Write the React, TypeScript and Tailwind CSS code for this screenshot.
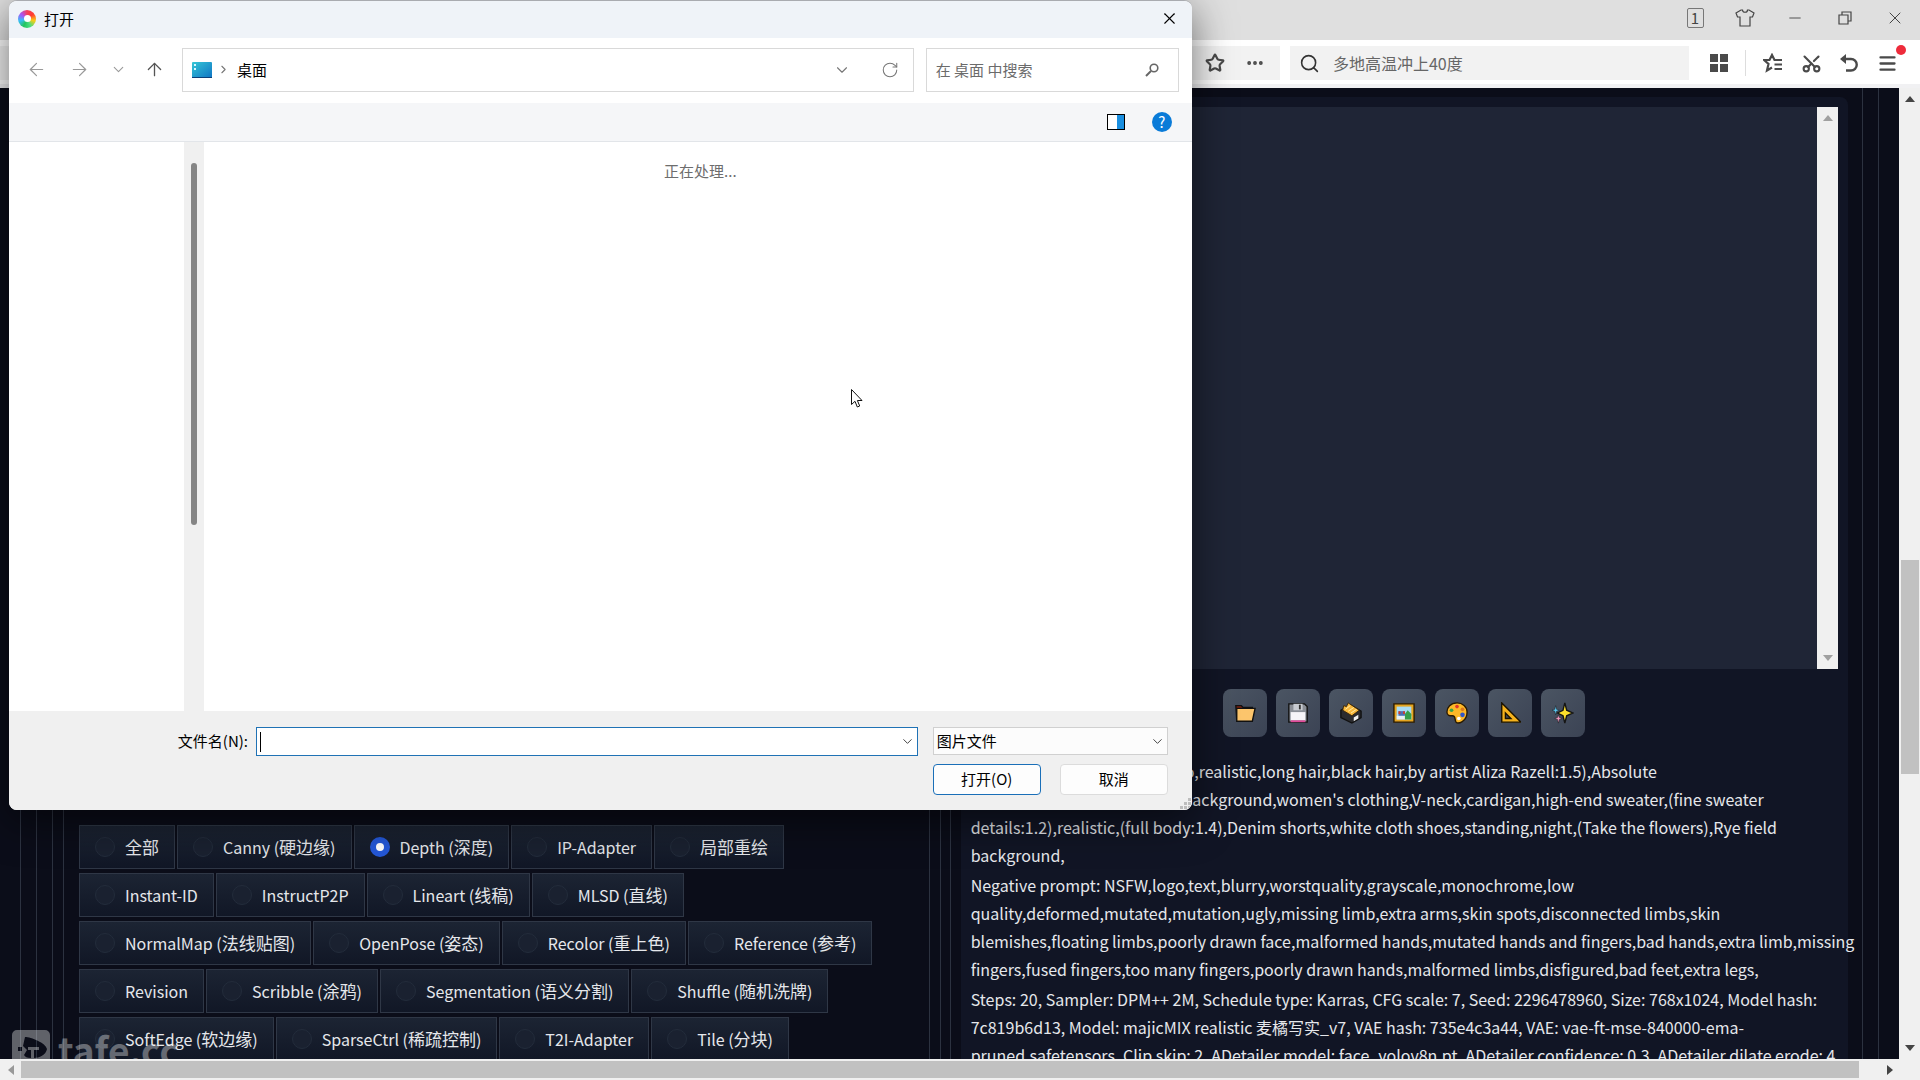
import React, { useState } from 'react';
import {
  ArrowLeft,
  ArrowRight,
  ArrowUp,
  ChevronDown,
  ChevronRight,
  Menu,
  Minus,
  MoreHorizontal,
  RotateCw,
  Scissors,
  Search,
  Star,
  X,
} from 'lucide-react';

const controlRows = [
  ['全部', 'Canny (硬边缘)', 'Depth (深度)', 'IP-Adapter', '局部重绘'],
  ['Instant-ID', 'InstructP2P', 'Lineart (线稿)', 'MLSD (直线)'],
  ['NormalMap (法线贴图)', 'OpenPose (姿态)', 'Recolor (重上色)', 'Reference (参考)'],
  ['Revision', 'Scribble (涂鸦)', 'Segmentation (语义分割)', 'Shuffle (随机洗牌)'],
  ['SoftEdge (软边缘)', 'SparseCtrl (稀疏控制)', 'T2I-Adapter', 'Tile (分块)'],
];

const negativeLines = [
  'Negative prompt: NSFW,logo,text,blurry,worstquality,grayscale,monochrome,low',
  'quality,deformed,mutated,mutation,ugly,missing limb,extra arms,skin spots,disconnected limbs,skin',
  'blemishes,floating limbs,poorly drawn face,malformed hands,mutated hands and fingers,bad hands,extra limb,missing',
  'fingers,fused fingers,too many fingers,poorly drawn hands,malformed limbs,disfigured,bad feet,extra legs,',
];

const settingLines = [
  'Steps: 20, Sampler: DPM++ 2M, Schedule type: Karras, CFG scale: 7, Seed: 2296478960, Size: 768x1024, Model hash:',
  '7c819b6d13, Model: majicMIX realistic 麦橘写实_v7, VAE hash: 735e4c3a44, VAE: vae-ft-mse-840000-ema-',
  'pruned.safetensors, Clip skip: 2, ADetailer model: face_yolov8n.pt, ADetailer confidence: 0.3, ADetailer dilate erode: 4,',
];

const toolIcons = [
  {
    name: '打开文件夹',
    art: (
      <>
        <path d="M2 4h6l2 2h10v14H3z" fill="#7a1f10" stroke="#111" strokeWidth="1.5" />
        <path d="M3 7h20l-3 14H3z" fill="#fcc56c" stroke="#111" strokeWidth="1.5" />
      </>
    ),
  },
  {
    name: '保存',
    art: (
      <>
        <path d="M2 2h17l3 3v17H2z" fill="#8b8f96" stroke="#111" strokeWidth="1.5" />
        <path d="M4 11h16v9H4z" fill="#f7f5f8" />
        <path d="M4 20h16v2H4z" fill="#e04a9a" />
        <path d="M7 2h10v7H7z" fill="#c8cbd0" />
        <path d="M13 3h2v5h-2z" fill="#333" />
      </>
    ),
  },
  {
    name: '打包保存',
    art: (
      <>
        <path d="M1 9l10-6 12 7v7l-10 6L1 17z" fill="#2b2b2e" stroke="#111" strokeWidth="1.5" />
        <path d="M3 9l1-5 3 1 2-4 12 8-8 6z" fill="#f8b83c" stroke="#3b2608" />
        <path d="M6 8l5-4M9 10l6-4M12 12l6-4" stroke="#fff0b0" />
        <path d="M15 17l5-3v4l-5 3z" fill="#f3f3f3" />
      </>
    ),
  },
  {
    name: '图生图',
    art: (
      <>
        <path d="M1 2h22v20H1z" fill="#e5a520" stroke="#2a1a00" strokeWidth="1.5" />
        <path d="M4 5h16v14H4z" fill="#a9dcf5" />
        <path d="M4 15h16v4H4z" fill="#e8f1f2" />
        <path d="M13 13l3-4 4 4v6h-7z" fill="#37a04a" />
        <path d="M6 10h7v5H6z" fill="#4c6fb5" />
        <path d="M6 10h2v3H6zM11 10h2v3h-2z" fill="#cf3d2e" />
      </>
    ),
  },
  {
    name: '局部重绘',
    art: (
      <>
        <path
          d="M12 1C5 1 1 6 1 11c0 4 3 4 6 4 4 0 2 4 4 7 2 2 12 0 12-11C23 5 18 1 12 1z"
          fill="#fdb827"
          stroke="#2a1a00"
          strokeWidth="1.500"
        />
        <circle cx="6" cy="9" r="2" fill="#3aa34a" />
        <circle cx="12" cy="5" r="2" fill="#e0372b" />
        <circle cx="18" cy="8" r="2" fill="#d9771c" />
        <circle cx="18" cy="14" r="2.5" fill="#3056c9" />
        <circle cx="14" cy="18" r="2" fill="#fff" />
      </>
    ),
  },
  {
    name: '后期处理',
    art: (
      <path
        d="M3 1v21h21zM7 12l6 6H7z"
        fill="#f5b21c"
        fillRule="evenodd"
        stroke="#1b1300"
        strokeWidth="1.5"
      />
    ),
  },
  {
    name: '高清修复',
    art: (
      <>
        <path d="M14 1l2 8 7 3-7 3-2 8-2-8-6-3 6-3z" fill="#fde02c" stroke="#151515" strokeWidth="1.5" />
        <path d="M4 4l1 4 3 1-3 1-1 4-1-4-3-1 3-1z" fill="#5cc8f2" stroke="#151515" strokeWidth=".5" />
        <path d="M7 14l1 3 3 1-3 1-1 4-1-4-3-1 3-1z" fill="#f49ac1" stroke="#151515" strokeWidth=".5" />
      </>
    ),
  },
];

const Triangle = ({ className }: { className: string }) => (
  <svg viewBox="0 0 10 6" className={`w-[10px] h-[6px] ${className}`}>
    <path d="M0 6L5 0l5 6z" fill="currentColor" />
  </svg>
);

const BrowserBar = () => (
  <header className="bg-white border-b-4 border-[#f1f1f3]">
    <div className="h-10 bg-[#dfdfdf] flex justify-end items-center pb-1 text-[#444] [&>button]:w-[50px] [&>button]:flex [&>button]:items-center [&>button]:justify-center">
      <button aria-label="标签页数">
        <span className="w-[17px] h-5 border border-[#777] rounded-xs text-[15px] leading-[18px] text-center">1</span>
      </button>
      <button aria-label="皮肤">
        <svg viewBox="0 0 20 18" className="w-5 h-[18px]" fill="none" stroke="currentColor" strokeWidth="1.2">
          <path d="M6 1h1.500c0 3 5 3 5 0H14l5 3-1.500 4H15v9H5V8H2.500L1 4z" />
        </svg>
      </button>
      <button aria-label="最小化"><Minus size={18} strokeWidth={1.2} /></button>
      <button aria-label="还原">
        <svg viewBox="0 0 14 14" className="w-[14px] h-[14px]" fill="none" stroke="currentColor" strokeWidth="1.2">
          <path d="M1 4h9v9H1zM4 4V1h9v9h-3" />
        </svg>
      </button>
      <button aria-label="关闭窗口"><X size={20} strokeWidth={1.2} /></button>
    </div>
    <div className="h-11 flex items-center pt-[2px]">
      <div className="h-[34px] basis-2/3 bg-[#f2f2f2] flex items-center justify-end pr-[5px] text-[#4a4a4a] [&>button]:w-10 [&>button]:flex [&>button]:justify-center">
        <button aria-label="收藏"><Star size={20} strokeWidth={2.6} /></button>
        <button aria-label="更多"><MoreHorizontal size={20} strokeWidth={2.6} /></button>
      </div>
      <label className="h-[34px] flex-1 ml-[10px] bg-[#f2f2f2] flex items-center gap-[13px] pl-[9px]">
        <Search size={21} strokeWidth={1.8} className="text-[#333]" />
        <input
          type="search"
          aria-label="搜索"
          placeholder="多地高温冲上40度"
          className="flex-1 bg-transparent outline-none text-base placeholder:text-[#666]"
        />
      </label>
      <button aria-label="应用" className="w-[57px] flex justify-center border-r border-[#ddd] pl-1 py-1">
        <svg viewBox="0 0 18 18" className="w-[18px] h-[18px]" fill="#4a4a4a">
          <path d="M0 0h8v8H0zM10 0h8v8h-8zM0 10h8v8H0zM10 10h8v8h-8z" />
        </svg>
      </button>
      <div className="flex items-center pl-2 pr-[14px] text-[#4a4a4a] [&>button]:w-[38px] [&>button]:flex [&>button]:justify-center">
        <button aria-label="收藏夹">
          <svg viewBox="0 0 20 20" className="w-5 h-5" fill="none" stroke="currentColor" strokeWidth="2.2">
            <path d="M15 7h-3.500L9 2 6.500 7H1l4.500 4L4 17.500 9 14.500M11.500 7H19M11.500 11.500H19M11.500 16H19" />
          </svg>
        </button>
        <button aria-label="截图"><Scissors size={21} strokeWidth={2.4} className="-rotate-90" /></button>
        <button aria-label="恢复">
          <svg viewBox="0 0 20 20" className="w-5 h-5" fill="none" stroke="currentColor" strokeWidth="2.4">
            <path d="M5 6h7a5.500 5.500 0 0 1 0 11.500H7" />
            <path d="M7 1v10L1 6z" fill="currentColor" stroke="none" />
          </svg>
        </button>
        <button aria-label="菜单" className="relative">
          <Menu size={21} strokeWidth={2.6} />
          <span className="absolute -top-2 right-0 w-[10px] h-[10px] rounded-full bg-[#ee2b3b]" />
        </button>
      </div>
    </div>
  </header>
);

// Chinese part of a label is set one size larger than the latin part
const ControlLabel = ({ name }: { name: string }) => (
  <span>
    {name.split(/([\u4e00-\u9fa5]+)/).map((part, index) =>
      index % 2 === 1 ? (
        <span key={index} className="text-[17px]">{part}</span>
      ) : (
        part
      )
    )}
  </span>
);

const ControlTypes = () => {
  const [selected, setSelected] = useState('Depth (深度)');

  return (
    <fieldset className="flex flex-col gap-1">
      <legend className="text-lg leading-[28px] mb-3">控制类型</legend>
      {controlRows.map((row) => (
        <div key={row[0]} className="flex gap-[2px]">
          {row.map((name) => (
            <label
              key={name}
              className="h-11 px-[15px] flex items-center gap-[10px] whitespace-nowrap border border-[#2f3746] bg-gradient-to-b from-[#1c2433] to-[#111726]"
            >
              <input
                type="radio"
                name="control-type"
                checked={selected === name}
                onChange={() => setSelected(name)}
                className="appearance-none w-5 h-5 rounded-full border border-[#232c3b] bg-[#1a2130] checked:border-[6px] checked:border-[#2458d8] checked:bg-white"
              />
              <ControlLabel name={name} />
            </label>
          ))}
        </div>
      ))}
    </fieldset>
  );
};

const OutputPanel = () => (
  <section className="mt-[9px] flex-1 rounded-t-lg bg-[#111525] px-[10px] pt-[10px]">
    <div className="h-[562px] flex bg-[#1f2536]">
      <div className="flex-1" />
      <div className="w-[21px] bg-[#f0f0f0] flex flex-col justify-between items-center py-2 text-[#a0a0a0]">
        <Triangle className="" />
        <Triangle className="rotate-180" />
      </div>
    </div>
    <div className="mt-5 flex justify-center gap-[9px]">
      {toolIcons.map((tool) => (
        <button
          key={tool.name}
          aria-label={tool.name}
          className="w-11 h-12 rounded-lg flex items-center justify-center bg-gradient-to-br from-[#4b5563] to-[#3b4354]"
        >
          <svg viewBox="0 0 24 24" className="w-[22px] h-[22px]">{tool.art}</svg>
        </button>
      ))}
    </div>
    <div className="mt-5 flex flex-col gap-[2px] whitespace-nowrap">
      <div>
        <p className="pl-[214px]">o,realistic,long hair,black hair,by artist Aliza Razell:1.5),Absolute</p>
        <p className="pl-[212px]">background,women's clothing,V-neck,cardigan,high-end sweater,(fine sweater</p>
        <p>details:1.2),realistic,(full body:1.4),Denim shorts,white cloth shoes,standing,night,(Take the flowers),Rye field</p>
        <p>background,</p>
      </div>
      <div>
        {negativeLines.map((line) => (
          <p key={line}>{line}</p>
        ))}
      </div>
      <div>
        {settingLines.map((line) => (
          <p key={line}>{line}</p>
        ))}
      </div>
    </div>
  </section>
);

const OpenDialog = () => (
  <div
    role="dialog"
    aria-label="打开"
    className="absolute left-[9px] top-0 w-[61.6%] h-3/4 flex flex-col rounded-lg overflow-hidden bg-white text-[15px] leading-5 text-black border-t border-[#a9abb0] shadow-[0_10px_40px_rgba(0,0,0,0.55)]"
  >
    <div className="h-[37px] shrink-0 bg-[#eff3f8] flex items-center pl-[9px] pr-[13px] pb-[2px]">
      <span className="w-[18px] h-[18px] rounded-full bg-[conic-gradient(#f43f5e,#ff3b30,#facc15,#4ade80,#22c55e,#38bdf8,#a855f7,#f43f5e)] flex items-center justify-center">
        <span className="w-[7px] h-[7px] rounded-full bg-white" />
      </span>
      <h1 className="flex-1 ml-2">打开</h1>
      <button aria-label="关闭"><X size={19} strokeWidth={1.4} /></button>
    </div>

    <div className="h-[65px] shrink-0 flex items-center pr-[13px] pb-[2px] text-[#777]">
      <div className="w-[173px] flex items-center pl-[17px] text-[#999]">
        <button aria-label="后退"><ArrowLeft size={21} strokeWidth={1.4} /></button>
        <button aria-label="前进" className="ml-[22px]"><ArrowRight size={21} strokeWidth={1.4} /></button>
        <button aria-label="最近位置" className="ml-5"><ChevronDown size={17} strokeWidth={1.5} /></button>
        <button aria-label="上移" className="ml-[17px] text-[#555]"><ArrowUp size={21} strokeWidth={1.5} /></button>
      </div>
      <div className="flex-1 h-11 border border-[#d9d9d9] flex items-center pl-[9px] pr-[14px]">
        <svg viewBox="0 0 20 16" className="w-5 h-4">
          <defs>
            <linearGradient id="desk" x1="0" y1="0" x2="1" y2="1">
              <stop offset="0" stopColor="#35c6d6" />
              <stop offset="1" stopColor="#0f74c4" />
            </linearGradient>
          </defs>
          <rect width="20" height="16" rx="1" fill="url(#desk)" />
          <path d="M2 2h2v2H2zM2 6h2v2H2z" fill="#d8f7ff" />
          <path d="M0 15h20v1H0z" fill="#0a3f78" />
        </svg>
        <ChevronRight size={13} strokeWidth={2} className="ml-[5px]" />
        <span className="flex-1 ml-[7px] text-black">桌面</span>
        <button aria-label="展开"><ChevronDown size={18} strokeWidth={1.5} /></button>
        <button aria-label="刷新" className="ml-[30px]"><RotateCw size={18} strokeWidth={1.4} /></button>
      </div>
      <label className="w-[253px] h-11 ml-3 border border-[#d9d9d9] flex items-center px-[9px]">
        <input
          type="search"
          aria-label="搜索桌面"
          placeholder="在 桌面 中搜索"
          className="flex-1 min-w-0 outline-none placeholder:text-[#6b6b6b]"
        />
        <svg viewBox="0 0 14 14" className="w-[14px] h-[14px] mr-[10px]" fill="none" stroke="#666" strokeWidth="1.6">
          <circle cx="9" cy="5" r="3.8" />
          <path d="M6 8l-5 5" strokeWidth="2" />
        </svg>
      </label>
    </div>

    <div className="h-[39px] shrink-0 bg-[#f5f6f8] border-b border-[#e2e5e9] flex items-center justify-end gap-[27px] pr-5">
      <button aria-label="预览窗格" className="w-[18px] h-4 border border-black bg-white flex justify-end">
        <span className="w-[7px] h-full bg-[#1a8fe0]" />
      </button>
      <button aria-label="帮助" className="w-5 h-5 rounded-full bg-[#0a7bd8] text-white text-[15px] leading-5">?</button>
    </div>

    <div className="flex-1 flex">
      <div className="w-[175px]" />
      <div className="w-5 bg-[#f0f0f0] pt-[21px] pl-[7px]">
        <div className="w-[6px] h-[362px] rounded-full bg-[#858585]" />
      </div>
      <p className="flex-1 pl-[5px] pt-[19px] text-center text-[#6d6d6d]">正在处理...</p>
    </div>

    <form className="h-[99px] shrink-0 bg-[#f0f0f0] pt-4 pr-6 flex gap-[15px]" onSubmit={(e) => e.preventDefault()}>
      <div className="flex-1 flex items-start">
        <label htmlFor="file-name" className="w-[247px] pr-2 leading-7 text-right">文件名(N):</label>
        <div className="flex-1 h-[29px] border border-[#1f72b5] bg-white flex items-center pr-[2px]">
          <span className="ml-[3px] w-px h-5 bg-black" />
          <input id="file-name" type="text" className="flex-1 h-full outline-none" />
          <ChevronDown size={15} strokeWidth={1.6} className="text-[#444]" />
        </div>
      </div>
      <div className="w-[235px]">
        <div className="relative">
          <select
            aria-label="文件类型"
            className="appearance-none block w-full h-7 border border-[#d0d0d0] bg-[#fcfcfc] pl-[3px]"
          >
            <option>图片文件</option>
          </select>
          <ChevronDown size={15} strokeWidth={1.6} className="absolute right-[3px] top-[7px] text-[#444] pointer-events-none" />
        </div>
        <div className="mt-[9px] flex justify-between">
          <button className="w-[108px] h-[31px] pb-px rounded-sm border border-[#1a6fb8] bg-[#fdfdfd]">打开(O)</button>
          <button className="w-[108px] h-[31px] pb-px rounded-sm border border-[#dcdcdc] bg-[#fdfdfd]">取消</button>
        </div>
      </div>
    </form>
    <svg viewBox="0 0 12 12" className="absolute right-0 bottom-0 w-3 h-3" fill="#bdbdbd">
      <path d="M8 0h3v3H8zM4 4h3v3H4zM8 4h3v3H8zM0 8h3v3H0zM4 8h3v3H4zM8 8h3v3H8z" />
    </svg>
  </div>
);

const Watermark = () => (
  <div className="absolute left-3 top-[942px] flex items-center gap-2 text-white opacity-35 pointer-events-none">
    <svg viewBox="0 0 38 38" className="w-[38px] h-[38px]">
      <path
        d="M5 0h28a5 5 0 0 1 5 5v28a5 5 0 0 1-5 5H5a5 5 0 0 1-5-5V5a5 5 0 0 1 5-5zM13 7c6 0 21 6 22 12-1 6-8 9-13 9v-8h5v-3H16v3h3v8c-4 0-6-1-7-3l3-5-4-4zM6 17h4v4H6z"
        fill="currentColor"
        fillRule="evenodd"
      />
    </svg>
    <span className="text-[37px] leading-[38px] font-bold">tafe.cc</span>
  </div>
);

const App = () => {
  return (
    <div className="relative h-screen flex flex-col overflow-hidden bg-[#f0f0f0] font-['Noto_Sans_CJK_SC',sans-serif]">
      <BrowserBar />
      <div className="flex-1 min-h-0 flex">
        <main className="relative flex-1 min-w-0 overflow-hidden bg-[#0b0d19] text-[#e5e7eb] text-base leading-[28px]">
          <div className="h-full mx-5 px-[15px] border-x border-[#2c3240]">
            <div className="h-full pl-[15px] flex gap-[9px] border-x border-[#2c3240]">
              <div className="w-[49.1%] px-[10px] border-x border-[#2c3240]">
                <div className="h-full px-[15px] pt-[697px] border-x border-[#2c3240]">
                  <ControlTypes />
                </div>
              </div>
              <div className="flex-1 min-w-0 flex flex-col pl-[10px] pr-[14px] border-l border-[#2c3240]">
                <OutputPanel />
              </div>
            </div>
          </div>
          <Watermark />
        </main>
        <div className="w-[21px] bg-[#f0f0f0] flex flex-col items-center py-2 text-[#444]">
          <Triangle className="" />
          <div className="flex-1 w-full pt-[458px] pl-[2px] pr-px">
            <div className="h-[214px] bg-[#c1c1c1]" />
          </div>
          <Triangle className="rotate-180" />
        </div>
      </div>
      <div className="h-[21px] shrink-0 bg-[#f0f0f0] flex items-center">
        <div className="w-[21px] flex justify-center text-[#999]"><Triangle className="-rotate-90" /></div>
        <div className="flex-1 h-[17px] bg-[#c1c1c1]" />
        <div className="w-[61px] flex justify-center text-[#444]"><Triangle className="rotate-90" /></div>
      </div>
      <OpenDialog />
      <svg viewBox="0 0 12 19" className="absolute left-[851px] top-[389px] w-3 h-[19px]">
        <path d="M.5.5v15l3.500-3.200 2.300 5.700 2.400-1-2.300-5.500h4.600z" fill="#fff" stroke="#111" />
      </svg>
    </div>
  );
};

export default App;
